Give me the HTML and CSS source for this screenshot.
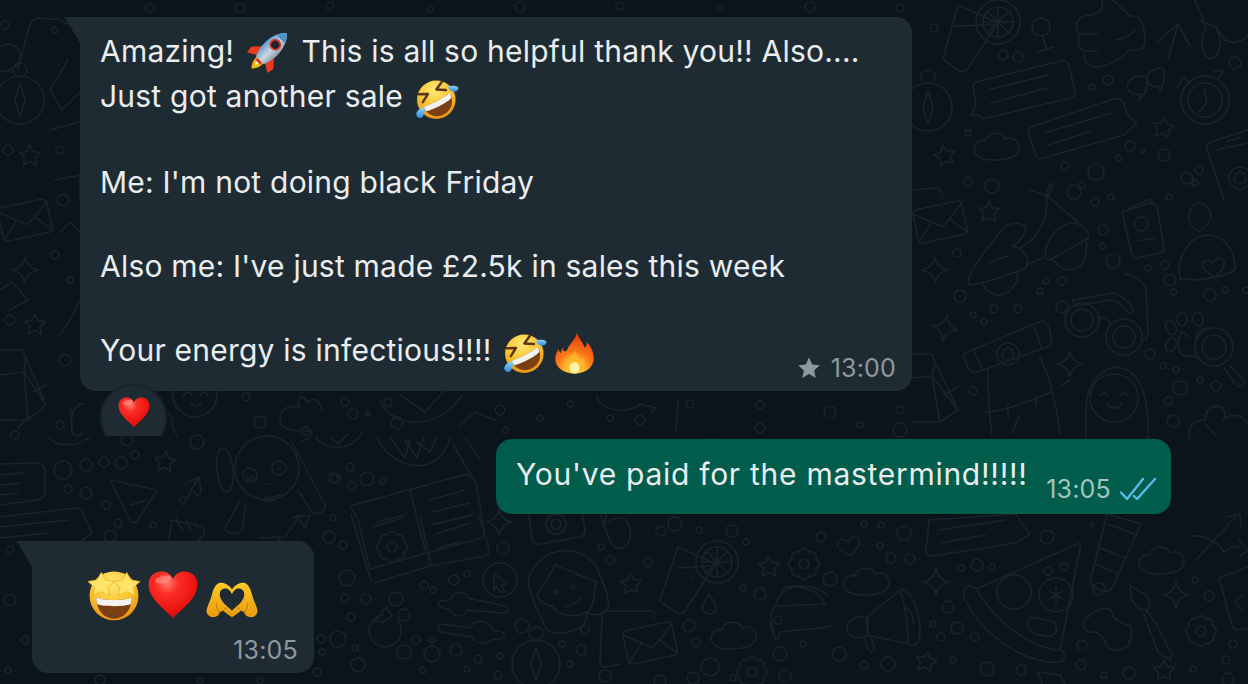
FILE: index.html
```html
<!DOCTYPE html>
<html lang="en">
<head>
<meta charset="utf-8">
<title>Chat</title>
<link rel="stylesheet" href="styles.css">
</head>
<body>
<svg class="defs" aria-hidden="true">
  <defs>
    <radialGradient id="gHeart" cx="38%" cy="25%" r="80%">
      <stop offset="0" stop-color="#ff7a6e"/><stop offset=".3" stop-color="#fb2c24"/><stop offset=".8" stop-color="#e8100e"/><stop offset="1" stop-color="#a80a10"/>
    </radialGradient>
    <radialGradient id="gFace" cx="45%" cy="25%" r="80%">
      <stop offset="0" stop-color="#ffe978"/><stop offset=".55" stop-color="#fcc22c"/><stop offset="1" stop-color="#e8890f"/>
    </radialGradient>
    <linearGradient id="gHands" x1="0" y1="0" x2="0" y2="1">
      <stop offset="0" stop-color="#ffc928"/><stop offset="1" stop-color="#e89a0c"/>
    </linearGradient>
    <radialGradient id="gFire" cx="50%" cy="92%" r="90%">
      <stop offset="0" stop-color="#fff6c8"/><stop offset=".18" stop-color="#ffd23a"/><stop offset=".5" stop-color="#fb7a16"/><stop offset="1" stop-color="#e9340f"/>
    </radialGradient>
    <linearGradient id="gBody" x1="0" y1="0" x2="1" y2="0">
      <stop offset="0" stop-color="#5f9cd0"/><stop offset=".55" stop-color="#c9d8e4"/><stop offset="1" stop-color="#8a98a8"/>
    </linearGradient>
    <linearGradient id="gTear" x1="0" y1="0" x2="0" y2="1">
      <stop offset="0" stop-color="#8fd4fb"/><stop offset="1" stop-color="#2a8fe6"/>
    </linearGradient>
    <symbol id="e-heart" viewBox="0 0 64 64">
      <path fill="url(#gHeart)" d="M32 61C25 51 2 38 2 19 2 8 10 3 18 3c6 0 11 3 14 9 3-6 8-9 14-9 8 0 16 5 16 16 0 19-23 32-30 42Z"/>
      <ellipse cx="20" cy="13" rx="10" ry="4.5" fill="#ff9d92" opacity=".55" transform="rotate(-12 20 13)"/>
    </symbol>
    <symbol id="e-rocket" viewBox="0 0 64 64">
      <g transform="rotate(45 32 32)">
        <path fill="#f9b30c" d="M26 48c-2 6 1 13 6 18 5-5 8-12 6-18Z"/>
        <path fill="#fff0a0" d="M29 48c-1 4 1 8 3 11 2-3 4-7 3-11Z"/>
        <path fill="#ec3a1d" d="M22 30 9 44l2 10 12-7Z"/>
        <path fill="#ec3a1d" d="M42 30l13 14-2 10-12-7Z"/>
        <path fill="url(#gBody)" d="M32-7c9 8 13 21 13 32 0 9-2 17-5 24H24c-3-7-5-15-5-24C19 14 23 1 32-7Z"/>
        <path fill="#4f90c8" d="M32-7c4 3.500 6.800 8 8.800 13H23.200C25.200 1 28-3.500 32-7Z"/>
        <path fill="#d6301f" d="M28 49h8l1 4H27Z"/>
        <circle cx="32" cy="17" r="8.500" fill="#d8382b"/>
        <circle cx="32" cy="17" r="5.800" fill="#20242c"/>
      </g>
    </symbol>
    <symbol id="e-rofl" viewBox="0 0 64 64">
      <circle cx="31" cy="33" r="28" fill="url(#gFace)"/>
      <g transform="rotate(-28 31 33)">
        <path fill="#7a3f12" d="M9 33c7 3 37 3 44 0 0 15-9 24-22 24S9 48 9 33Z"/>
        <path fill="#f1f1ef" d="M9 33c7 3 37 3 44 0 0 3-.5 5-1.500 8-9 3-32 3-41 0-1-3-1.500-5-1.500-8Z"/>
        <path fill="none" stroke="#5f3413" stroke-width="3.600" stroke-linecap="round" stroke-linejoin="round" d="M12 14l12 6-12 7M50 14l-12 6 12 7"/>
      </g>
      <path fill="url(#gTear)" d="M48 14c5-2 12-2 15 1 1 4-3 7-7 6-4 0-7-3-8-7Z"/>
      <path fill="url(#gTear)" d="M14 44c1 5 0 11-4 15-4 2-8-1-8-5 0-5 6-9 12-10Z"/>
    </symbol>
    <symbol id="e-fire" viewBox="0 0 64 64">
      <path fill="url(#gFire)" d="M36 0c2 9 9 15 12 24 2-2 4-5 3-9 6 6 11 15 11 26 0 13-12 23-30 23S2 54 2 41c0-7 3-11 5-15 1 3 2 5 4 6 0-3 1-6 4-9-3 8 4 8 6 3 3-8 13-15 15-26Z"/>
      <path fill="#ffb52a" opacity=".8" d="M33 28c1 6 7 9 9 15 1-1 2-2 2-4 3 4 4 7 4 10 0 8-7 15-16 15S16 57 16 49c0-4 2-7 4-10 0 2 1 3 2 4 1-6 9-9 11-15Z"/>
      <ellipse cx="32" cy="55" rx="8" ry="9" fill="#fff1a8"/>
    </symbol>
    <symbol id="e-struck" viewBox="0 0 64 64">
      <circle cx="32" cy="33" r="29" fill="url(#gFace)"/>
      <path fill="#7a3f12" d="M11 35c8 4 34 4 42 0 0 15-9 25-21 25S11 50 11 35Z"/>
      <path fill="#f4f4f2" d="M11 35c8 4 34 4 42 0 0 3-.5 5-1.200 8-9 3-31 3-39.600 0-.7-3-1.200-5-1.200-8Z"/>
      <path fill="#ffe36a" stroke="#e8a914" stroke-width=".8" stroke-linejoin="round" d="M17 4l5 9 11 2-8 7 2 10-10-5-10 5 2-10-8-7 11-2Z" transform="translate(0 1)"/>
      <path fill="#ffe36a" stroke="#e8a914" stroke-width=".8" stroke-linejoin="round" d="M47 4l5 9 11 2-8 7 2 10-10-5-10 5 2-10-8-7 11-2Z" transform="translate(0 1)"/>
    </symbol>
    <symbol id="e-hands" viewBox="0 0 64 44">
      <path fill="url(#gHands)" d="M17 1C22 0 28 3 32 9 36 3 42 0 47 1 53 3 55 10 57 17 59 24 62 29 63 34 64 39 60 43 55 43 51 43 48 41 47 37L43 35 34 42C33 43 31 43 30 42L21 35 17 37C16 41 13 43 9 43 4 43 0 39 1 34 2 29 5 24 7 17 9 10 11 3 17 1Z"/>
      <path fill="#1f2b33" d="M32 35C27 30 17 24 17 15 17 10 21 8 24 8 28 8 30 11 32 15 34 11 36 8 40 8 43 8 47 10 47 15 47 24 37 30 32 35Z"/>
      <path fill="none" stroke="#b9780a" stroke-width="1.100" stroke-linecap="round" d="M17 37C14 34 13 30 13 26M47 37C50 34 51 30 51 26M21 35 26 31M43 35 38 31"/>
    </symbol>
  </defs>
</svg>

<svg class="wallpaper" viewBox="0 0 1248 684" aria-hidden="true">
  <defs>
    <path id="d-star" d="M0-11 3.200-4.400 10.500-3.400 5.200 1.700 6.500 8.900 0 5.500-6.500 8.900-5.200 1.700-10.500-3.400-3.200-4.400Z"/>
    <path id="d-spark" d="M0-13Q2-2 13 0 2 2 0 13-2 2-13 0-2-2 0-13Z"/>
    <path id="d-cloud" d="M-20 8C-27 2-20-8-12-6-10-16 6-16 8-8 18-12 26-2 20 6 16 14-14 16-20 8Z"/>
    <path id="d-heart" d="M0 9C-9 3-12-1-11-5-10-10-3-10 0-5 3-10 10-10 11-5 12-1 9 3 0 9Z"/>
    <g id="d-gear"><circle r="5"/><path d="M-5-12A5.500 5.500 0 0 1 5-12 5.500 5.500 0 0 1 12-5 5.500 5.500 0 0 1 12 5 5.500 5.500 0 0 1 5 12 5.500 5.500 0 0 1-5 12 5.500 5.500 0 0 1-12 5 5.500 5.500 0 0 1-12-5 5.500 5.500 0 0 1-5-12Z"/></g>
    <g id="d-compass"><circle r="24"/><path d="M0-17 5 0 0 17-5 0Z"/><circle cy="-30" r="7"/></g>
    <g id="d-envelope"><rect x="-25" y="-17" width="50" height="34" rx="4"/><path d="M-24-13-2 3C0 5 3 5 5 3L24-13M-24 15-9-1M24 15 10-1"/></g>
  </defs>
  <g class="doodles">
    <!-- top right -->
    <path d="M958 5 998 23 967 70C964 73 961 72 958 70L945 61C943 59 943 57 944 55ZM955 26 993 25"/>
    <circle cx="998" cy="22" r="22"/><circle cx="998" cy="22" r="15"/><path d="M998 7V37M983 22H1013M987 11 1009 33M1009 11 987 33"/>
    <circle cx="1041" cy="27" r="9"/><path d="M1042 36 1047 50M1038 52 1053 47"/>
    <path d="M1102 0C1104 8 1102 14 1085 16 1075 19 1074 31 1080 34 1077 40 1078 48 1084 51 1083 60 1087 65 1094 67 1105 68 1120 60 1130 50 1145 52 1147 45 1144 30 1142 18 1135 15 1130 16L1113 0M1080 34H1098M1084 51H1098M1115 40C1125 39 1130 35 1135 30"/>
    <path d="M1157 42 1178 24 1190 46M1178 24 1168 60"/>
    <path d="M1195 0 1206 27C1200 40 1200 55 1210 59 1222 57 1222 38 1216 27L1225 40C1235 45 1245 40 1248 35M1200 20 1215 27"/>
    <path d="M976 82 1061 61C1065 60 1068 62 1069 65L1075 92C1076 95 1074 97 1071 98L986 118C982 119 980 118 979 115L971 115 976 105 973 86C973 84 974 83 976 82ZM987 90 1048 75M991 103 1047 88"/>
    <path d="M1031 127 1113 99C1118 98 1122 99 1124 104L1127 114 1137 123 1127 132 1124 135 1043 158C1039 159 1036 157 1035 154L1029 134C1028 131 1029 128 1031 127ZM1044 133 1112 113M1048 145 1092 131"/>
    <path d="M1147 78C1143 75 1131 75 1128 84 1126 91 1133 96 1140 94 1141 92 1141 97 1139 100 1145 95 1148 88 1147 78ZM1163 69C1158 67 1147 70 1147 78 1147 84 1152 88 1158 86L1160 90C1164 85 1166 77 1163 69Z"/>
    <circle cx="1205" cy="100" r="24"/><circle cx="1205" cy="100" r="17"/><path d="M1204 88 1207 102 1199 112M1177 88 1183 77 1190 83M1213 72 1224 70 1219 78"/>
    <use href="#d-star" x="1163" y="128" transform="rotate(8 1163 128) "/>
    <use href="#d-compass" x="928" y="107"/>
    <use href="#d-cloud" x="997" y="147"/>
    <path d="M1248 130 1211 142C1207 143 1206 147 1207 150L1224 200M1248 143 1216 150M1226 142 1240 138"/>
    <circle cx="1240" cy="178" r="11"/><circle cx="1240" cy="178" r="6"/>
    <use href="#d-star" x="945" y="156" transform="rotate(-12 945 156)"/>
    <!-- right mid -->
    <use href="#d-envelope" x="940" y="222" transform="rotate(-12 940 222)"/>
    <path d="M912 190 936 188C940 188 942 191 943 198"/>
    <use href="#d-star" x="989" y="212"/>
    <use href="#d-spark" x="935" y="270"/>
    <use href="#d-spark" x="945" y="328" transform="rotate(10 945 328) scale(1)"/>
    <use href="#d-spark" x="1070" y="364"/>
    <path d="M968 282C970 270 985 250 1005 226 1012 222 1024 222 1026 229 1024 238 1018 243 1012 246 1028 250 1030 262 1026 268 1000 278 985 283 970 285Z M988 263 1007 256M1026 265 1042 258"/>
    <path d="M982 282C985 292 995 296 1000 295 1012 293 1018 283 1018 272M1045 258C1045 238 1060 222 1075 223 1085 225 1090 232 1088 238L1050 260ZM1052 258C1060 270 1070 272 1077 268 1085 264 1088 252 1086 240"/>
    <path d="M1030 190 1047 196C1055 190 1053 170 1045 197M1020 248C1035 240 1048 225 1047 196 1047 196 1058 205 1078 222"/>
    <path d="M1122 212 1150 203 1157 206 1164 247C1165 251 1163 253 1160 253L1137 258C1135 258 1133 257 1132 255ZM1122 212 1150 199 1154 205"/>
    <circle cx="1141" cy="224" r="7"/><path d="M1138 241 1154 238"/>
    <path d="M1199 203C1192 203 1188 212 1189 220 1192 228 1197 231 1200 231 1206 226 1212 220 1211 214 1209 207 1204 203 1199 203Z"/>
    <path d="M1180 278C1176 262 1186 237 1207 235 1225 235 1235 250 1235 270 1225 276 1200 282 1186 279 1182 280 1180 280 1180 278Z"/>
    <use href="#d-heart" x="1214" y="268" transform="rotate(-10 1214 268)"/>
    <circle cx="1082" cy="320" r="17"/><circle cx="1082" cy="320" r="11"/><circle cx="1124" cy="337" r="18"/><circle cx="1124" cy="337" r="11"/>
    <path d="M1072 300 1112 293C1120 293 1130 303 1133 310 1134 312 1130 314 1128 312 1125 308 1118 300 1110 300L1075 306ZM1098 322C1101 316 1106 316 1110 323M1124 275C1128 272 1145 280 1146 290L1148 332 1146 340 1142 340"/>
    <path d="M1190 337 1182 332C1177 334 1178 352 1182 355L1196 357M1196 340C1196 330 1204 328 1214 328M1230 366 1243 380C1246 385 1240 388 1236 385L1224 368"/>
    <circle cx="1214" cy="347" r="19"/><circle cx="1214" cy="347" r="12"/>
    <ellipse cx="1171" cy="328" rx="5" ry="7" transform="rotate(-25 1171 328)"/><ellipse cx="1182" cy="319" rx="5" ry="7"/><ellipse cx="1198" cy="319" rx="5" ry="7" transform="rotate(-10 1198 319)"/><ellipse cx="1171" cy="345" rx="5" ry="7" transform="rotate(25 1171 345)"/>
    <path d="M967 352 1039 322C1044 320 1047 323 1049 328L1051 338C1052 342 1051 345 1047 347L978 372C974 373 971 373 969 369L964 358C963 355 964 353 967 352ZM974 350 982 369M1034 326 1042 349"/>
    <circle cx="1008" cy="354" r="11"/><circle cx="1008" cy="354" r="6"/>
    <path d="M912 354 932 354 935 362 958 410 940 422H912M912 378 932 376 958 410M935 362 932 376 940 422M944 395 958 387"/>
    <path d="M988 368C988 395 990 420 992 435M1040 358C1048 372 1056 400 1060 435M985 412C1000 412 1020 405 1052 392M1008 404V418M1036 396V406"/>
    <path d="M1062 385 1070 380M1086 438C1085 400 1085 375 1115 367 1140 368 1148 395 1148 430 1146 445 1150 435 1150 438"/><circle cx="1114" cy="398" r="24"/>
    <path d="M1100 396C1104 392 1106 392 1108 396M1120 396C1124 392 1126 392 1128 396M1107 403C1112 410 1118 410 1122 403"/>
    <path d="M1190 440C1186 425 1196 420 1205 420 1205 410 1214 402 1222 408 1226 412 1226 418 1222 420 1232 412 1245 415 1248 425M1206 425 1216 436"/>
    <!-- left strip -->
    <path d="M80 30 60 20 40 18C32 18 30 24 28 30L18 70"/>
    <use href="#d-compass" x="20" y="100"/>
    <use href="#d-star" x="30" y="156"/>
    <use href="#d-envelope" x="25" y="220" transform="rotate(-12 25 220)"/>
    <use href="#d-spark" x="25" y="270"/>
    <use href="#d-star" x="35" y="325"/>
    <path d="M0 350 22 350 26 358 46 405 28 420H0M0 375 24 372 46 405M26 358 24 372 28 420M34 392 46 385"/>
    <path d="M60 335 70 320 80 300M0 290 12 282 28 300 10 310M68 60 50 90 62 110 80 92"/>
    <path d="M0 46C10 42 20 46 20 56 20 68 6 74 0 70M50 130 80 122M55 180 80 175 80 200M60 232 70 222 80 232"/>
    <!-- middle strip -->
    <path d="M48 438C58 447 78 447 90 437M18 428 30 416M70 408 73 435"/>
    <path d="M78 404 84 404C72 406 70 415 72 432 74 437 82 436 83 432M168 412 175 422M170 420 178 438"/>
    <circle cx="195" cy="395" r="22"/>
    <path d="M183 396C186 391 190 391 192 396M200 396C202 391 206 391 208 396M190 402C194 407 198 407 202 402"/>
    <use href="#d-star" x="165" y="462" transform="scale(1) rotate(6 165 462)"/>
    <ellipse cx="225" cy="470" rx="8" ry="22" transform="rotate(-6 225 470)"/>
    <circle cx="267" cy="468" r="32"/><circle cx="250" cy="475" r="7" /><circle cx="279" cy="468" r="7"/>
    <path d="M247 475A3 5 0 0 0 253 475M277 468A3 5 0 0 0 281 468M262 500C270 503 278 500 281 494 272 498 266 498 262 500ZM265 484H266M270 484H271M240 500 225 528C226 535 238 535 242 530L246 505M292 442 325 505C326 512 318 516 312 512L298 490"/>
    <path d="M110 480 157 490 138 520C136 523 133 523 131 521ZM131 505 147 500"/>
    <path d="M186 499 199 477 201 490C201 496 195 497 194 492M186 499C186 505 180 506 180 501 180 497 184 495 186 499M186 483 199 477"/>
    <path d="M0 464 36 463C42 463 45 467 45 472V492C45 497 42 499 38 500L0 505M0 475 22 473M0 485 20 483M0 495 18 493"/>
    <path d="M0 517 75 508C80 508 83 512 84 516L92 533 82 540M0 527 68 520M0 538 48 533"/>
    <path d="M170 520 200 526C203 527 205 530 204 534L198 541M172 523 168 541M176 518 183 532M186 520 190 530M195 522 198 528"/>
    <path d="M259 538 285 537 300 515 292 518 310 515 305 528 300 520M270 538C275 535 280 538 280 541"/>
    <path d="M316 437C325 452 352 452 362 432M331 437 338 444 348 434"/>
    <path d="M302 441C308 440 312 436 312 431 302 431 284 432 280 422 279 408 290 404 300 408 296 400 300 392 308 402 316 396 320 402 322 410"/><circle cx="305" cy="431" r="4"/>
    <path d="M377 437C390 470 440 480 450 437M390 437 405 458 410 440M424 437 417 458 405 440M437 437 430 452 417 442"/>
    <path d="M380 400C390 428 440 432 462 395M400 395 425 412 445 390"/>
    <path d="M350 506 463 475C470 474 474 478 476 483L484 530C485 535 482 538 478 539L370 569 358 520C355 512 352 510 350 506ZM410 490 425 550M377 522 404 515M430 500 465 490M433 512 470 503M436 524 472 515"/>
    <path d="M454 446 476 484M466 438 480 460"/>
    <path d="M700 448 712 438 722 450 718 462ZM640 404 656 408 650 414M596 396C602 410 622 415 640 405M678 400 676 430M1012 432 1020 415"/>
    <path d="M460 425 475 412 495 420"/>
    <!-- bottom book and centre -->
    <path d="M351 514 370 578C371 582 375 583 378 582L430 566 484 556C488 555 490 552 489 549L478 514M431 566 420 514M372 527 402 518M433 524 468 516M436 534 470 523M438 548 460 542"/>
    <use href="#d-gear" x="392" y="547" transform="rotate(0 392 547)"/>
    <use href="#d-spark" x="499" y="522"/>
    <circle cx="500" cy="580" r="17"/><path d="M494 573 507 584 501 585 505 592 500 592 497 586 494 590Z"/>
    <path d="M529 514 532 540C533 544 536 545 540 544L580 537C584 536 585 533 585 530L582 514"/><circle cx="556" cy="524" r="10"/><circle cx="556" cy="524" r="5"/>
    <path d="M600 514 606 530C612 547 615 550 622 548 632 545 632 530 628 524 625 516 616 516 608 522"/>
    <path d="M606 514 604 528"/>
    <path d="M546 628C532 600 522 580 534 568 548 544 586 545 598 570 606 590 610 600 608 608 604 615 594 617 586 612 588 620 584 628 574 630 564 634 550 635 546 628Z"/>
    <path d="M556 564C548 578 540 590 537 595 540 603 546 605 552 606 560 618 580 618 590 610 596 600 592 590 597 582 590 578 582 578 574 572 566 570 560 568 556 564Z"/>
    <circle cx="556" cy="592" r="2"/><circle cx="573" cy="587" r="2"/><path d="M565 607C572 606 577 602 580 598"/>
    <use href="#d-star" x="631" y="584" transform="rotate(-3 631 584)"/>
    <path d="M441 601 450 600C455 590 465 590 468 598L505 606C510 608 508 614 503 613L468 610C464 618 454 618 450 610L443 608C438 606 437 602 441 601ZM441 624 470 628C475 618 490 620 493 630L502 632C506 634 504 640 500 639L492 640C488 644 476 645 472 637L441 632C437 630 437 625 441 624Z"/>
    <path d="M397 620 A16 16 0 1 1 383 615M375 621 386 607 392 616 383 622 376 621"/>
    <use href="#d-compass" x="536" y="664" transform="scale(1)"/>
    <use href="#d-envelope" x="650" y="643" transform="rotate(-12 650 643)"/>
    <path d="M621 664 605 667C602 667 601 665 600 662L602 617C601 613 604 611 607 611L650 611C655 610 655 613 654 618"/>
    <path d="M678 547 716 564 684 612C682 614 680 614 678 613L662 603C660 601 660 599 661 597ZM676 568 710 566M683 573H684M692 577H693M688 590H689"/>
    <circle cx="717" cy="562" r="21"/><circle cx="717" cy="562" r="15"/><path d="M717 547V577M702 562H732M706 551 728 573M728 551 706 573"/>
    <path d="M709 594C704 602 701 607 703 610 706 616 714 615 716 610 717 605 713 600 709 594Z"/>
    <use href="#d-cloud" x="734" y="636" transform="scale(1)"/>
    <use href="#d-gear" x="752" y="672"/>
    <use href="#d-star" x="769" y="567"/>
    <use href="#d-gear" x="804" y="564"/>
    <path d="M774 630 C770 620 770 610 776 605 778 592 790 586 802 586 812 586 822 590 828 596M778 606 826 604M782 590C786 584 814 584 824 602M770 622C774 640 778 646 780 632 790 630 810 630 830 626"/>
    <circle cx="778" cy="620" r="4"/>
    <use href="#d-heart" x="849" y="547" transform="rotate(-12 849 547)"/>
    <use href="#d-cloud" x="867" y="582" transform="scale(1)"/>
    <path d="M866 618 899 591C906 585 916 600 920 625 921 642 916 648 908 644L868 635ZM866 618C856 613 847 622 847 628 847 638 858 640 868 635L868 618ZM899 591C906 600 908 630 908 644M904 607C912 610 915 620 913 625M864 638 869 650C872 654 875 650 874 646L870 636"/>
    <use href="#d-spark" x="936" y="582"/>
    <use href="#d-star" x="926" y="662" transform="rotate(12 926 662)"/>
    <path d="M929 520 1016 514 1022 524 1030 534 1018 542 998 546 932 556C928 556 926 553 926 550ZM938 530 1006 520M941 543 985 535"/>
    <path d="M964 590C967 584 972 585 976 589 1000 630 1040 650 1060 650 1066 652 1066 660 1060 662 1030 665 985 640 964 598ZM976 589 1077 544C1080 543 1081 545 1080 548L1060 650"/>
    <circle cx="1014" cy="592" r="17"/>
    <circle cx="1056" cy="595" r="17"/><path d="M1056 587V603M1049 591 1063 599M1063 591 1049 599"/>
    <path d="M1028 620C1033 615 1040 619 1046 620 1052 620 1058 623 1056 632 1050 640 1045 634 1038 635 1032 634 1026 628 1028 620Z"/>
    <circle cx="1048" cy="571" r="4"/><circle cx="1064" cy="567" r="4"/>
    <path d="M1107 514 1141 524 1112 588C1108 593 1096 592 1090 582ZM1108 524 1134 534M1100 548 1125 558M1096 564 1118 574"/><circle cx="1099" cy="589" r="6"/>
    <use href="#d-cloud" x="1162" y="561"/>
    <path d="M1196 560 1222 532C1228 526 1226 525 1236 517M1226 517 1240 514 1241 526M1192 536C1205 535 1218 542 1224 552 1232 546 1236 546 1240 548M1238 540 1248 550 1240 556"/>
    <use href="#d-spark" x="1176" y="595"/>
    <path d="M1130 586 1145 594C1152 602 1150 612 1145 610 1136 610 1130 600 1130 586ZM1146 610 1155 622 1172 655 1170 660 1158 652 1148 626 1144 614"/>
    <path d="M1084 622C1092 610 1108 604 1112 612 1114 622 1122 622 1130 626 1134 634 1130 640 1128 646 1120 652 1110 652 1106 645 1104 634 1096 632 1090 632 1086 632 1082 628 1084 622Z"/>
    <use href="#d-gear" x="1201" y="631"/>
    <path d="M1219 578 1248 567M1219 578 1232 625C1233 630 1236 631 1248 628M1235 602 1243 594M1235 602 1243 610"/>
    <use href="#d-star" x="1164" y="671"/>
    <path d="M1040 672 1060 675 1065 684M1038 672 1042 684"/>
    <!-- dots -->
    <g class="dots">
      <circle cx="934" cy="28" r="4"/><circle cx="1003" cy="55" r="5"/><circle cx="1018" cy="57" r="5"/><circle cx="1108" cy="80" r="5"/><circle cx="1092" cy="87" r="3"/><circle cx="1235" cy="63" r="6"/><circle cx="968" cy="133" r="3"/><circle cx="1130" cy="146" r="5"/><circle cx="1143" cy="151" r="2"/><circle cx="1119" cy="158" r="3"/><circle cx="1164" cy="155" r="6"/><circle cx="1187" cy="178" r="6"/><circle cx="1199" cy="170" r="4"/><circle cx="1195" cy="183" r="3"/><circle cx="1096" cy="172" r="8"/><circle cx="1065" cy="166" r="4"/><circle cx="1082" cy="185" r="3"/>
      <circle cx="968" cy="182" r="4"/><circle cx="992" cy="186" r="7"/><circle cx="1074" cy="192" r="7"/><circle cx="1095" cy="202" r="4"/><circle cx="1111" cy="197" r="3"/><circle cx="1169" cy="197" r="3"/><circle cx="957" cy="253" r="4"/><circle cx="960" cy="296" r="6"/><circle cx="1103" cy="230" r="5"/><circle cx="1103" cy="246" r="3"/><circle cx="1113" cy="261" r="7"/><circle cx="1148" cy="268" r="3"/><circle cx="1165" cy="265" r="4"/><circle cx="1170" cy="280" r="6"/><circle cx="1174" cy="292" r="3"/><circle cx="1210" cy="295" r="6"/><circle cx="1225" cy="290" r="3"/><circle cx="1246" cy="290" r="3"/>
      <circle cx="1046" cy="281" r="3"/><circle cx="1062" cy="281" r="4"/><circle cx="1040" cy="291" r="3"/><circle cx="1062" cy="307" r="6"/><circle cx="1018" cy="309" r="4"/><circle cx="994" cy="309" r="4"/><circle cx="973" cy="315" r="3"/><circle cx="984" cy="322" r="3"/><circle cx="1150" cy="354" r="5"/><circle cx="1163" cy="366" r="3"/><circle cx="1176" cy="370" r="3"/><circle cx="1200" cy="380" r="3"/><circle cx="1180" cy="388" r="7"/><circle cx="1216" cy="386" r="5"/><circle cx="1168" cy="401" r="4"/><circle cx="1173" cy="421" r="6"/><circle cx="973" cy="391" r="4"/>
      <circle cx="246" cy="397" r="4"/><circle cx="260" cy="422" r="6"/><circle cx="345" cy="402" r="4"/><circle cx="388" cy="402" r="4"/><circle cx="353" cy="414" r="5"/><circle cx="368" cy="413" r="2"/><circle cx="397" cy="423" r="6"/><circle cx="127" cy="440" r="6"/><circle cx="197" cy="442" r="7"/><circle cx="63" cy="470" r="9"/><circle cx="86" cy="465" r="6"/><circle cx="104" cy="462" r="5"/><circle cx="121" cy="463" r="6"/><circle cx="135" cy="455" r="4"/><circle cx="68" cy="489" r="4"/><circle cx="86" cy="493" r="6"/><circle cx="106" cy="505" r="4"/><circle cx="118" cy="523" r="4"/><circle cx="153" cy="525" r="3"/><circle cx="110" cy="536" r="6"/><circle cx="333" cy="478" r="5"/><circle cx="350" cy="467" r="4"/><circle cx="336" cy="479" r="5"/><circle cx="367" cy="479" r="7"/><circle cx="383" cy="481" r="3"/><circle cx="352" cy="486" r="4"/><circle cx="333" cy="518" r="3"/>
      <circle cx="570" cy="404" r="3"/><circle cx="500" cy="410" r="5"/><circle cx="540" cy="418" r="3"/><circle cx="640" cy="420" r="5"/><circle cx="760" cy="405" r="4"/><circle cx="830" cy="412" r="6"/><circle cx="690" cy="404" r="4"/><circle cx="610" cy="418" r="3"/><circle cx="860" cy="425" r="3"/><circle cx="760" cy="428" r="5"/><circle cx="900" cy="410" r="4"/><circle cx="505" cy="430" r="3"/><circle cx="900" cy="430" r="7"/>
      <circle cx="329" cy="537" r="6"/><circle cx="343" cy="545" r="4"/><circle cx="347" cy="578" r="8"/><circle cx="345" cy="598" r="4"/><circle cx="366" cy="599" r="5"/><circle cx="351" cy="617" r="4"/><circle cx="338" cy="639" r="8"/><circle cx="321" cy="639" r="4"/><circle cx="355" cy="648" r="3"/><circle cx="322" cy="652" r="3"/><circle cx="358" cy="665" r="7"/><circle cx="317" cy="672" r="4"/><circle cx="396" cy="599" r="7"/><circle cx="424" cy="585" r="4"/><circle cx="433" cy="590" r="3"/><circle cx="454" cy="580" r="5"/><circle cx="467" cy="574" r="3"/><circle cx="404" cy="615" r="6"/><circle cx="416" cy="640" r="4"/><circle cx="432" cy="640" r="3"/><circle cx="432" cy="654" r="8"/><circle cx="404" cy="652" r="7"/><circle cx="423" cy="670" r="3"/><circle cx="456" cy="650" r="6"/><circle cx="478" cy="659" r="4"/><circle cx="500" cy="656" r="3"/><circle cx="467" cy="669" r="3"/><circle cx="498" cy="675" r="4"/><circle cx="522" cy="626" r="7"/><circle cx="503" cy="548" r="6"/><circle cx="585" cy="630" r="4"/><circle cx="562" cy="644" r="3"/><circle cx="581" cy="650" r="5"/><circle cx="570" cy="664" r="3"/><circle cx="601" cy="547" r="3"/><circle cx="610" cy="560" r="4"/><circle cx="648" cy="562" r="4"/><circle cx="661" cy="531" r="5"/><circle cx="675" cy="524" r="7"/><circle cx="699" cy="530" r="3"/><circle cx="732" cy="531" r="6"/><circle cx="746" cy="542" r="3"/><circle cx="743" cy="588" r="3"/><circle cx="760" cy="594" r="6"/><circle cx="689" cy="626" r="6"/><circle cx="696" cy="642" r="4"/><circle cx="710" cy="667" r="9"/><circle cx="693" cy="678" r="6"/><circle cx="733" cy="678" r="3"/><circle cx="780" cy="654" r="7"/><circle cx="785" cy="676" r="6"/><circle cx="803" cy="644" r="3"/><circle cx="605" cy="676" r="6"/><circle cx="660" cy="681" r="6"/>
      <circle cx="821" cy="537" r="5"/><circle cx="864" cy="524" r="3"/><circle cx="881" cy="525" r="3"/><circle cx="904" cy="533" r="7"/><circle cx="891" cy="558" r="5"/><circle cx="910" cy="559" r="5"/><circle cx="880" cy="546" r="3"/><circle cx="830" cy="579" r="7"/><circle cx="961" cy="568" r="3"/><circle cx="977" cy="565" r="6"/><circle cx="992" cy="567" r="3"/><circle cx="948" cy="607" r="6"/><circle cx="933" cy="624" r="3"/><circle cx="957" cy="628" r="6"/><circle cx="941" cy="637" r="4"/><circle cx="975" cy="637" r="4"/><circle cx="839" cy="654" r="7"/><circle cx="864" cy="665" r="4"/><circle cx="888" cy="664" r="7"/><circle cx="953" cy="660" r="3"/><circle cx="987" cy="669" r="7"/><circle cx="1021" cy="670" r="5"/><circle cx="1082" cy="645" r="5"/><circle cx="1081" cy="665" r="5"/><circle cx="1104" cy="675" r="3"/><circle cx="1129" cy="673" r="6"/><circle cx="1047" cy="537" r="7"/><circle cx="1092" cy="525" r="2"/><circle cx="1195" cy="580" r="3"/><circle cx="1209" cy="596" r="5"/><circle cx="1233" cy="644" r="4"/><circle cx="1226" cy="660" r="4"/><circle cx="1193" cy="669" r="3"/><circle cx="1228" cy="679" r="6"/>
      <circle cx="5" cy="25" r="4"/><circle cx="55" cy="30" r="3"/><circle cx="8" cy="150" r="5"/><circle cx="60" cy="150" r="4"/><circle cx="63" cy="200" r="6"/><circle cx="55" cy="255" r="4"/><circle cx="10" cy="320" r="5"/><circle cx="70" cy="280" r="3"/><circle cx="65" cy="360" r="6"/><circle cx="60" cy="425" r="4"/><circle cx="15" cy="435" r="4"/><circle cx="10" cy="550" r="4"/><circle cx="10" cy="600" r="6"/><circle cx="25" cy="640" r="4"/><circle cx="8" cy="670" r="3"/><circle cx="200" cy="680" r="3"/><circle cx="100" cy="680" r="5"/><circle cx="260" cy="681" r="3"/><circle cx="150" cy="8" r="4"/><circle cx="240" cy="8" r="5"/><circle cx="330" cy="6" r="4"/><circle cx="430" cy="9" r="3"/><circle cx="520" cy="7" r="5"/><circle cx="620" cy="6" r="4"/><circle cx="720" cy="8" r="3"/><circle cx="810" cy="7" r="5"/><circle cx="900" cy="8" r="4"/>
    </g>
  </g>
</svg>

<main class="chat">
  <article class="bubble incoming first">
    <div class="line tall-a">Amazing! <svg class="emoji rocket"><use href="#e-rocket"/></svg> This is all so helpful thank you!! Also....</div>
    <div class="line tall-b">Just got another sale <svg class="emoji rofl"><use href="#e-rofl"/></svg></div>
    <div class="line blank"></div>
    <div class="line">Me: I'm not doing black Friday</div>
    <div class="line blank"></div>
    <div class="line">Also me: I've just made £2.5k in sales this week</div>
    <div class="line blank"></div>
    <div class="line">Your energy is infectious!!!! <svg class="emoji rofl"><use href="#e-rofl"/></svg><svg class="emoji fire"><use href="#e-fire"/></svg></div>
    <div class="meta over">
      <svg class="star" viewBox="0 0 24 24"><path d="M12 1.500l3.200 7 7.600.8-5.700 5.100 1.600 7.600-6.700-3.900-6.700 3.900 1.600-7.600L1.200 9.300l7.600-.8Z"/></svg>
      <time>13:00</time>
    </div>
  </article>

  <div class="reaction"><div class="reaction-disc"><svg class="react-heart"><use href="#e-heart"/></svg></div></div>

  <article class="bubble outgoing">
    <div class="line">You've paid for the mastermind!!!!!</div>
    <div class="meta out-meta">
      <time>13:05</time>
      <svg class="ticks" viewBox="0 0 36 24"><path d="M1 15.500 7 22 23 2M14 19 17 22 35 2"/></svg>
    </div>
  </article>

  <article class="bubble incoming last">
    <div class="emoji-row">
      <svg class="big struck"><use href="#e-struck"/></svg>
      <svg class="big bigheart"><use href="#e-heart"/></svg>
      <svg class="big hands"><use href="#e-hands"/></svg>
    </div>
    <div class="meta"><time>13:05</time></div>
  </article>
</main>
</body>
</html>
```

FILE: styles.css
```css
html, body {
  margin: 0;
  height: 100%;
}

body {
  position: relative;
  width: 1248px;
  height: 684px;
  overflow: hidden;
  background: #0c141b;
  color: #e9edef;
  font-family: Inter, "Liberation Sans", sans-serif;
  font-size: 30px;
  letter-spacing: 0.22px;
}

.defs {
  position: absolute;
  width: 0;
  height: 0;
}

.wallpaper {
  position: absolute;
  inset: 0;
  width: 1248px;
  height: 684px;
}

.doodles,
.doodles use {
  fill: none;
  stroke: #19232a;
  stroke-width: 1.6;
  stroke-linecap: round;
  stroke-linejoin: round;
}

.chat {
  position: relative;
  display: flex;
  flex-direction: column;
  align-items: flex-start;
  padding-top: 17px;
}

.bubble {
  position: relative;
  box-sizing: border-box;
  border-radius: 16px;
}

.incoming {
  background: #1f2b33;
  border-top-left-radius: 0;
}

.incoming::before {
  content: "";
  position: absolute;
  top: 0;
  left: -16px;
  width: 16px;
  height: 26px;
  background: #1f2b33;
  clip-path: polygon(0 0, 100% 0, 100% 100%, 3px 4px);
}

.first {
  width: 832px;
  height: 374px;
  margin-left: 80px;
  padding: 13px 20px 0;
}

.line {
  height: 42px;
  line-height: 42px;
  white-space: nowrap;
}

.tall-a {
  height: 45px;
}

.tall-b {
  height: 44px;
}

.blank {
  height: 42px;
}

.emoji {
  display: inline-block;
  vertical-align: middle;
}

.rocket {
  position: relative;
  top: -2px;
  width: 44px;
  height: 44px;
  margin: 0 3px;
}

.rofl {
  width: 44px;
  height: 44px;
  margin-left: 3px;
}

.fire {
  width: 41px;
  height: 46px;
  margin-left: 7px;
}

.meta {
  display: flex;
  align-items: center;
  justify-content: flex-end;
  color: #8d999f;
  font-size: 25px;
  letter-spacing: 0.2px;
  line-height: 30px;
}

.over {
  position: absolute;
  right: 16px;
  bottom: 8px;
  gap: 10px;
}

.star {
  width: 24px;
  height: 24px;
  fill: #8d999f;
}

.reaction {
  position: relative;
  width: 67px;
  height: 52px;
  margin: -7px 0 0 100px;
  overflow: hidden;
}

.reaction-disc {
  display: flex;
  justify-content: center;
  box-sizing: border-box;
  width: 67px;
  height: 67px;
  padding-top: 10px;
  border: 2px solid #18232a;
  border-radius: 50%;
  background: #1f2b33;
}

.react-heart {
  width: 34px;
  height: 33px;
}

.outgoing {
  display: flex;
  align-items: flex-end;
  justify-content: space-between;
  align-self: flex-end;
  width: 675px;
  height: 75px;
  margin: 3px 77px 0 0;
  padding: 14px 15px 10px 20px;
  background: #005c4b;
}

.outgoing .line {
  align-self: flex-start;
  letter-spacing: 0.72px;
}

.out-meta {
  gap: 9px;
  color: #a3c4bc;
}

.ticks {
  width: 36px;
  height: 24px;
  fill: none;
  stroke: #53bdeb;
  stroke-width: 2.4;
  stroke-linecap: round;
  stroke-linejoin: round;
}

.last {
  width: 282px;
  height: 132px;
  margin: 27px 0 0 32px;
  padding: 28px 16px 0;
}

.emoji-row {
  display: flex;
  align-items: center;
  justify-content: center;
  gap: 6px;
  height: 52px;
  margin-bottom: 14px;
}

.big {
  display: block;
}

.struck {
  width: 54px;
  height: 54px;
}

.bigheart {
  width: 52px;
  height: 52px;
}

.hands {
  width: 54px;
  height: 36px;
  margin-top: 10px;
}
```
